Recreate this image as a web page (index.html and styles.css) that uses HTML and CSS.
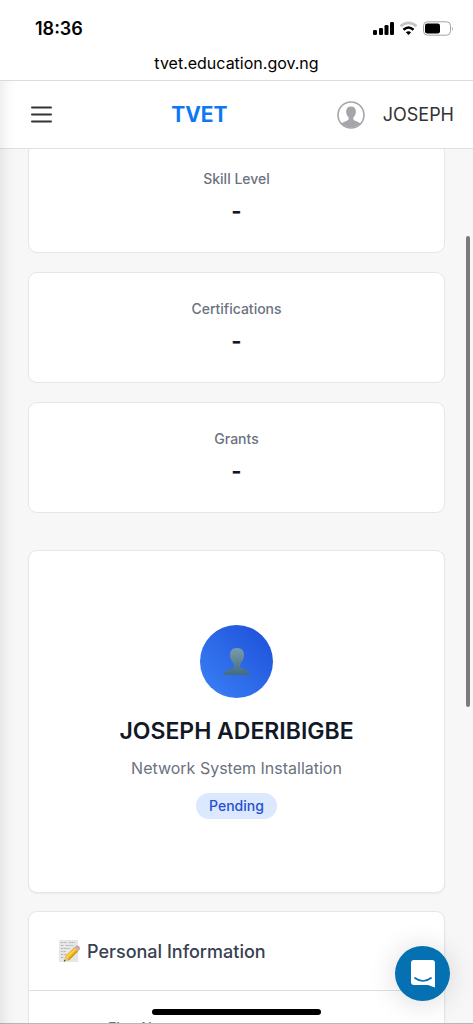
FILE: index.html
```html
<!DOCTYPE html>
<html lang="en">
<head>
<meta charset="utf-8">
<meta name="viewport" content="width=device-width, initial-scale=1">
<title>TVET</title>
<link rel="stylesheet" href="styles.css">
</head>
<body>
<div class="status">
  <span class="time">18:36</span>
  <svg class="status-icons" width="82" height="16" viewBox="0 0 82 16" aria-hidden="true">
    <rect x="1" y="9" width="4" height="5" rx="1.3"/>
    <rect x="7" y="7" width="4" height="7" rx="1.3"/>
    <rect x="12.500" y="4" width="4" height="10" rx="1.300"/>
    <rect x="18" y="1" width="4" height="13" rx="1.300"/>
    <path d="M28.500 5.300Q36.500-1.500 44.500 5.300" fill="none" stroke="#c4c4c4" stroke-width="2.600"/>
    <path d="M31.500 8.700Q36.500 4.300 41.500 8.700" fill="none" stroke="#000" stroke-width="2.600"/>
    <path d="M33.800 11.300Q36.500 9.300 39.200 11.300L36.500 14Z"/>
    <rect x="51.500" y=".8" width="27" height="13.400" rx="4" fill="none" stroke="#a3a3a3"/>
    <rect x="53" y="2.500" width="15" height="10" rx="2.300"/>
    <path d="M80 5.500Q81.700 7.500 80 9.500Z" fill="#a3a3a3"/>
  </svg>
</div>
<div class="address">tvet.education.gov.ng</div>
<header class="header">
  <button class="menu" aria-label="Menu">
    <svg width="21" height="18" viewBox="0 0 21 18"><path d="M1 1.500H20M1 8.500H20M1 15.500H20" stroke="#333" stroke-width="2" stroke-linecap="round"/></svg>
  </button>
  <a class="brand" href="#">TVET</a>
  <button class="user">
    <svg width="28" height="28" viewBox="0 0 28 28" aria-hidden="true">
      <circle cx="14" cy="14" r="13" fill="#fff" stroke="#a5a6aa" stroke-width="1.600"/>
      <path d="M14 5.500C10.500 5.500 8.700 8 9.200 11.500C9.500 14 10.700 15.500 11.600 16.300V18.500C10.500 20.300 6.700 20.300 4.700 22.500A13 13 0 0 0 23.300 22.500C21.300 20.300 17.500 20.300 16.400 18.500V16.300C17.300 15.500 18.500 14 18.800 11.500C19.300 8 17.500 5.500 14 5.500Z" fill="#a5a6aa"/>
    </svg>
    <span>JOSEPH</span>
  </button>
</header>
<main class="main">
  <section class="stats">
    <div class="card stat"><span class="label">Skill Level</span><strong class="value">-</strong></div>
    <div class="card stat"><span class="label">Certifications</span><strong class="value">-</strong></div>
    <div class="card stat"><span class="label">Grants</span><strong class="value">-</strong></div>
  </section>
  <section class="card profile">
    <div class="avatar">
      <svg width="28" height="30" viewBox="0 0 28 30" aria-hidden="true">
        <defs><linearGradient id="bust" x1="0" y1="0" x2="0" y2="1"><stop offset="0" stop-color="#7b9dac"/><stop offset="1" stop-color="#416b82"/></linearGradient></defs>
        <path d="M14 1C9 1 6.500 4.500 7 9C7.300 12.500 9 15 10.700 16.800V20C9.300 23 1 21.500 1 28H27C27 21.500 18.700 23 17.300 20V16.800C19 15 20.700 12.500 21 9C21.500 4.500 19 1 14 1Z" fill="url(#bust)"/>
      </svg>
    </div>
    <h1 class="name">JOSEPH ADERIBIGBE</h1>
    <p class="course">Network System Installation</p>
    <span class="badge">Pending</span>
  </section>
  <section class="card info">
    <h2 class="info-title">
      <svg width="22" height="24" viewBox="0 0 22 24" aria-hidden="true">
        <rect x="1" y="1" width="19" height="22" fill="#e6e6e7"/>
        <path d="M3 3.500H9M11 3.500H17M3 6.500H6M8 6.500H15M3 9.500H12M3 12.500H8M3 15.500H9M3 18.500H6" stroke="#b4b6ba" stroke-dasharray="2 .7"/>
        <path d="M7 17.500L16 8.500L20 12.500L11 21.500Z" fill="#edb51d"/>
        <path d="M8.500 18.700L17.500 9.700" stroke="#ffda55" stroke-width="1.500"/>
        <path d="M10.500 21L19.500 12" stroke="#b98418"/>
        <path d="M16 8.500L17.500 7L21.500 11L20 12.500Z" fill="#b5b7bc"/>
        <path d="M17.500 7Q19.500 6 21 7.500T21.500 11Z" fill="#e58a96"/>
        <path d="M7 17.500L5.800 22.500L11 21.500Z" fill="#dfc081"/>
        <path d="M6.200 20.700L5.800 22.500L7.700 22.100Z" fill="#333"/>
      </svg>
      Personal Information
    </h2>
    <div class="field">First Name</div>
  </section>
</main>
<div class="edge-shade"></div>
<div class="scrollbar"></div>
<button class="chat" aria-label="Open chat">
  <svg width="26" height="28" viewBox="0 0 26 28"><path d="M4 0H22Q25 0 25 3V27.500L18 25H4Q1 25 1 22V3Q1 0 4 0Z" fill="#fff"/><path d="M5 18Q13 24 21 18" fill="none" stroke="#0571b3" stroke-width="1.700" stroke-linecap="round"/></svg>
</button>
<div class="home-bar"></div>
</body>
</html>
```
FILE: styles.css
```css
* { box-sizing: border-box; }
body {
  margin: 0;
  height: 100vh;
  display: flex;
  flex-direction: column;
  overflow: hidden;
  background: #f7f7f8;
  border-bottom: 1px solid #b8b8ba;
  font-family: Inter, "Liberation Sans", sans-serif;
  color: #111827;
}
button { border: 0; padding: 0; background: none; font: inherit; color: inherit; cursor: pointer; }
svg { display: block; }
h1, h2, p { margin: 0; }

.status {
  display: flex;
  justify-content: space-between;
  align-items: center;
  padding: 16px 19px 0 35px;
  height: 42px;
  background: #fff;
  color: #000;
}
.time { font-size: 18px; font-weight: 600; line-height: 24px; }
.address {
  height: 39px;
  padding-top: 9px;
  background: #fff;
  border-bottom: 1px solid #dcdcde;
  color: #000;
  font-size: 16px;
  line-height: 24px;
  text-align: center;
}
.header {
  display: flex;
  justify-content: space-between;
  align-items: center;
  flex: none;
  height: 68px;
  padding: 0 19px 0 31px;
  background: #fff;
  border-bottom: 1px solid #dfe0e3;
  z-index: 1;
}
.menu { padding-right: 10px; }
.brand { color: #0d78f2; font-size: 21px; font-weight: 700; text-decoration: none; }
.user {
  display: flex;
  align-items: center;
  gap: 18px;
  color: #333;
  font-size: 18px;
}

.main { flex: 1; min-height: 0; overflow: hidden; padding: 0 28px; }
.card { background: #fff; border: 1px solid #e4e6eb; border-radius: 9px; }
.stats { display: flex; flex-direction: column; gap: 19px; margin-top: -7px; }
.stat {
  display: flex;
  flex-direction: column;
  align-items: center;
  gap: 6px;
  padding: 26px 16px 25px;
}
.label { color: #6b7280; font-size: 14px; font-weight: 500; line-height: 20px; }
.value { font-size: 22px; font-weight: 700; line-height: 32px; }

.profile {
  display: flex;
  flex-direction: column;
  align-items: center;
  margin-top: 37px;
  padding: 74px 16px 73px;
  box-shadow: 0 1px 2px #0000000d;
}
.avatar {
  display: flex;
  align-items: center;
  justify-content: center;
  width: 73px;
  height: 73px;
  border-radius: 50%;
  background: linear-gradient(45deg, #3b82f6, #1d4ed8);
}
.name { margin-top: 17px; font-size: 23px; font-weight: 600; line-height: 32px; }
.course { margin-top: 9px; color: #6b7280; font-size: 16px; line-height: 24px; }
.badge {
  margin-top: 13px;
  padding: 3px 13px;
  border-radius: 13px;
  background: #dbe8fd;
  color: #2450d4;
  font-size: 14px;
  font-weight: 500;
  line-height: 20px;
}

.info { margin-top: 18px; box-shadow: 0 1px 2px #0000000d; }
.info-title {
  display: flex;
  align-items: center;
  gap: 7px;
  height: 79px;
  padding-left: 29px;
  border-bottom: 1px solid #dcdfe4;
  color: #374151;
  font-size: 18px;
  font-weight: 500;
}
.field { padding: 27px 79px; color: #6b7280; font-size: 14px; font-weight: 500; line-height: 20px; }

.edge-shade {
  position: fixed;
  z-index: 2;
  top: 81px;
  bottom: 0;
  left: 0;
  width: 16px;
  background: linear-gradient(90deg, #00000010, #00000005 50%, #00000000);
}
.scrollbar {
  position: fixed;
  z-index: 2;
  top: 23%;
  right: 3px;
  width: 4px;
  height: 46%;
  border-radius: 2px;
  background: #7b7b7b;
}
.chat {
  position: fixed;
  z-index: 2;
  right: 23px;
  bottom: 23px;
  display: flex;
  align-items: center;
  justify-content: center;
  width: 55px;
  height: 55px;
  border-radius: 50%;
  background: #0571b3;
  box-shadow: 0 2px 28px #00000026;
}
.home-bar {
  position: fixed;
  z-index: 3;
  bottom: 9px;
  left: 50%;
  width: 169px;
  height: 6px;
  margin-left: -85px;
  border-radius: 3px;
  background: #000;
}
```
